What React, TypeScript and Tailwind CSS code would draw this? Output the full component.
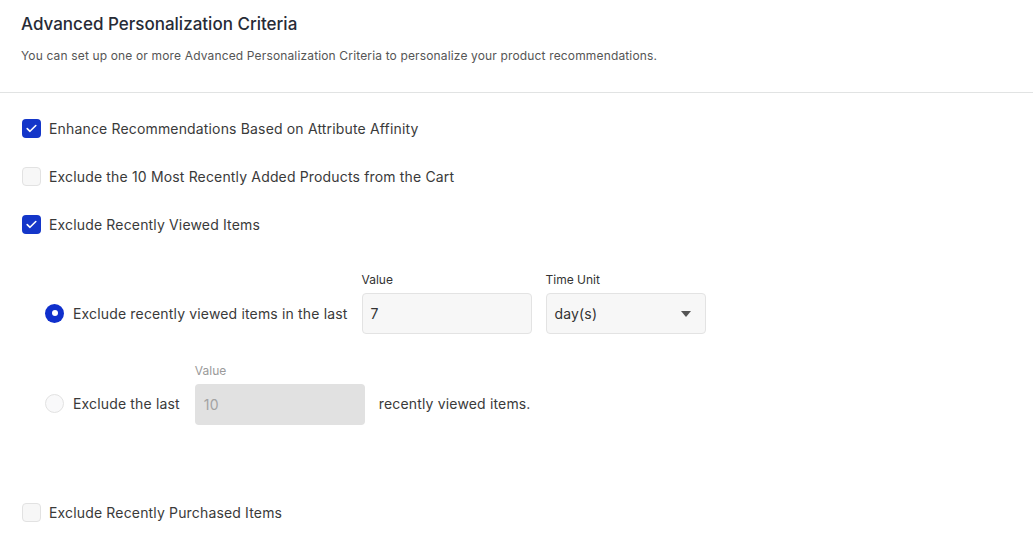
import React from "react";

function Check({ checked }: { checked: boolean }) {
  if (checked) {
    return (
      <span className="flex h-[19px] w-[19px] shrink-0 items-center justify-center rounded-[4px] bg-[#1436c9]">
        <svg width="11" height="9" viewBox="0 0 11 9" fill="none">
          <path d="M1.2 4.6 L4 7.3 L9.8 1.5" stroke="white" strokeWidth="1.6" strokeLinecap="round" strokeLinejoin="round" />
        </svg>
      </span>
    );
  }
  return <span className="h-[19px] w-[19px] shrink-0 rounded-[4px] border border-[#e2e2e2] bg-[#f7f7f7]" />;
}

function Radio({ checked }: { checked: boolean }) {
  if (checked) {
    return (
      <span className="flex h-[19px] w-[19px] shrink-0 items-center justify-center rounded-full bg-[#0f2fcc]">
        <span className="h-[6px] w-[6px] rounded-full bg-white" />
      </span>
    );
  }
  return <span className="h-[19px] w-[19px] shrink-0 rounded-full border border-[#e2e2e2] bg-[#f9f9fa]" />;
}

function CheckRow({ checked, label }: { checked: boolean; label: string }) {
  return (
    <div className="flex h-6 items-center gap-[8px] pl-[22px]">
      <Check checked={checked} />
      <span className="text-[14px] tracking-[0.16px] text-[#3a3a3a]">{label}</span>
    </div>
  );
}

export default function App() {
  return (
    <div className="min-h-[538px] w-[1033px] bg-white font-['Inter',sans-serif]">
      <div className="px-[21px] pt-[14px]">
        <h2 className="text-[17px] font-medium leading-[21px] text-[#272b36]">Advanced Personalization Criteria</h2>
        <p className="mt-[13px] text-[12px] leading-[16px] tracking-[0.15px] text-[#555555]">
          You can set up one or more Advanced Personalization Criteria to personalize your product recommendations.
        </p>
      </div>
      <div className="mt-[28px] h-px bg-[#e1e3e3]" />

      <div className="flex flex-col gap-6 pt-[23px]">
        <CheckRow checked label="Enhance Recommendations Based on Attribute Affinity" />
        <CheckRow checked={false} label="Exclude the 10 Most Recently Added Products from the Cart" />
        <CheckRow checked label="Exclude Recently Viewed Items" />
      </div>

      <div className="mt-9 flex flex-col gap-[29px] pl-[45px] tracking-[0.16px]">
        <div className="flex items-end">
          <div className="flex h-[41px] items-center gap-[9px] pb-[1px]">
            <Radio checked />
            <span className="text-[14px] text-[#3a3a3a]">Exclude recently viewed items in the last</span>
          </div>
          <div className="ml-[14px] flex flex-col gap-[5px]">
            <span className="text-[12px] leading-4 tracking-normal text-[#333333]">Value</span>
            <div className="flex h-[41px] w-[170px] items-center rounded-[4px] border border-[#e3e3e3] bg-[#f7f7f7] px-[8px] text-[14px] text-[#333333]">
              7
            </div>
          </div>
          <div className="ml-[14px] flex flex-col gap-[5px]">
            <span className="text-[12px] leading-4 tracking-normal text-[#333333]">Time Unit</span>
            <div className="flex h-[41px] w-[160px] items-center justify-between rounded-[4px] border border-[#e3e3e3] bg-[#f7f7f7] pl-[8px] pr-[14px] text-[14px] text-[#333333]">
              <span>day(s)</span>
              <svg width="10" height="6" viewBox="0 0 10 6">
                <path d="M0 0 H10 L5 6 Z" fill="#555555" />
              </svg>
            </div>
          </div>
        </div>

        <div className="flex items-end">
          <div className="flex h-[41px] items-center gap-[9px] pb-[2px]">
            <Radio checked={false} />
            <span className="text-[14px] text-[#3a3a3a]">Exclude the last</span>
          </div>
          <div className="ml-[15px] flex flex-col gap-[5px]">
            <span className="text-[12px] leading-4 tracking-normal text-[#9a9a9a]">Value</span>
            <div className="flex h-[41px] w-[170px] items-center rounded-[4px] bg-[#e1e1e1] px-[9px] text-[14px] text-[#a3a3a3]">
              10
            </div>
          </div>
          <div className="ml-[14px] flex h-[41px] items-center pb-[2px] text-[14px] text-[#3a3a3a]">recently viewed items.</div>
        </div>
      </div>

      <div className="mt-[75px] pb-4">
        <CheckRow checked={false} label="Exclude Recently Purchased Items" />
      </div>
    </div>
  );
}
